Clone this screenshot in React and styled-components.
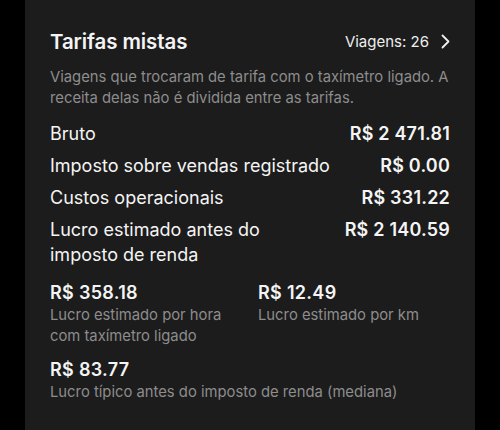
import React from 'react';
import styled, { createGlobalStyle } from 'styled-components';

const GlobalStyle = createGlobalStyle`
  html, body {
    margin: 0;
    padding: 0;
    background: #000;
  }
  body {
    font-family: Inter, "Noto Sans", "Liberation Sans", sans-serif;
    -webkit-font-smoothing: antialiased;
  }
`;

const Page = styled.div`
  display: flex;
  justify-content: center;
  height: 430px;
  overflow: hidden;
  background: #000;
`;

const Card = styled.section`
  width: 450px;
  box-sizing: border-box;
  background: #1c1c1c;
  padding: 28px 25px 0 25px;
  color: #f4f4f4;
`;

const Header = styled.div`
  display: flex;
  align-items: center;
  justify-content: space-between;
  height: 26px;
`;

const Title = styled.h2`
  margin: 0;
  font-size: 20.5px;
  font-weight: 600;
  letter-spacing: -0.1px;
`;

const TripsLink = styled.button`
  display: flex;
  align-items: center;
  gap: 12px;
  padding: 0;
  border: 0;
  background: none;
  color: #eee;
  font: inherit;
  font-size: 15px;
  cursor: pointer;
`;

const Note = styled.p`
  margin: 13px 0 0;
  font-size: 14.8px;
  line-height: 21px;
  color: #8d8d8d;
`;

const Lines = styled.div`
  display: flex;
  flex-direction: column;
  gap: 7px;
  margin-top: 12px;
`;

const Line = styled.div`
  display: flex;
  justify-content: space-between;
  align-items: flex-start;
  gap: 24px;
  font-size: 18px;
  line-height: 25px;
`;

const Label = styled.span`
  max-width: ${p => p.$narrow ? '225px' : 'none'};
`;

const Amount = styled.span`
  font-weight: 600;
  white-space: nowrap;
  letter-spacing: 0.2px;
`;

const Stats = styled.div`
  display: grid;
  grid-template-columns: 208px 1fr;
  row-gap: 11px;
  margin-top: 14px;
`;

const Stat = styled.div`
  grid-column: ${p => p.$wide ? '1 / -1' : 'auto'};
`;

const StatValue = styled.div`
  font-size: 18px;
  font-weight: 600;
  line-height: 24px;
  letter-spacing: 0.3px;
`;

const StatLabel = styled.div`
  font-size: 14.8px;
  line-height: 21px;
  color: #8d8d8d;
  max-width: ${p => p.$wide ? 'none' : '190px'};
`;

const Chevron = () => (
  <svg width="9" height="15" viewBox="0 0 9 15" fill="none">
    <path d="M1.5 1.5 L7.5 7.5 L1.5 13.5" stroke="#eee" strokeWidth="1.8" strokeLinecap="round" strokeLinejoin="round" />
  </svg>
);

const lines = [
  { label: 'Bruto', amount: 'R$ 2 471.81' },
  { label: 'Imposto sobre vendas registrado', amount: 'R$ 0.00' },
  { label: 'Custos operacionais', amount: 'R$ 331.22' },
  { label: 'Lucro estimado antes do imposto de renda', amount: 'R$ 2 140.59', narrow: true },
];

const stats = [
  { value: 'R$ 358.18', label: 'Lucro estimado por hora com taxímetro ligado' },
  { value: 'R$ 12.49', label: 'Lucro estimado por km' },
  { value: 'R$ 83.77', label: 'Lucro típico antes do imposto de renda (mediana)', wide: true },
];

export default function App() {
  return (
    <Page>
      <GlobalStyle />
      <Card>
        <Header>
          <Title>Tarifas mistas</Title>
          <TripsLink>
            Viagens: 26
            <Chevron />
          </TripsLink>
        </Header>
        <Note>
          Viagens que trocaram de tarifa com o taxímetro ligado. A receita delas não é dividida entre as tarifas.
        </Note>

        <Lines>
          {lines.map(row => (
            <Line key={row.label}>
              <Label $narrow={row.narrow}>{row.label}</Label>
              <Amount>{row.amount}</Amount>
            </Line>
          ))}
        </Lines>

        <Stats>
          {stats.map(s => (
            <Stat key={s.value} $wide={s.wide}>
              <StatValue>{s.value}</StatValue>
              <StatLabel $wide={s.wide}>{s.label}</StatLabel>
            </Stat>
          ))}
        </Stats>
      </Card>
    </Page>
  );
}
